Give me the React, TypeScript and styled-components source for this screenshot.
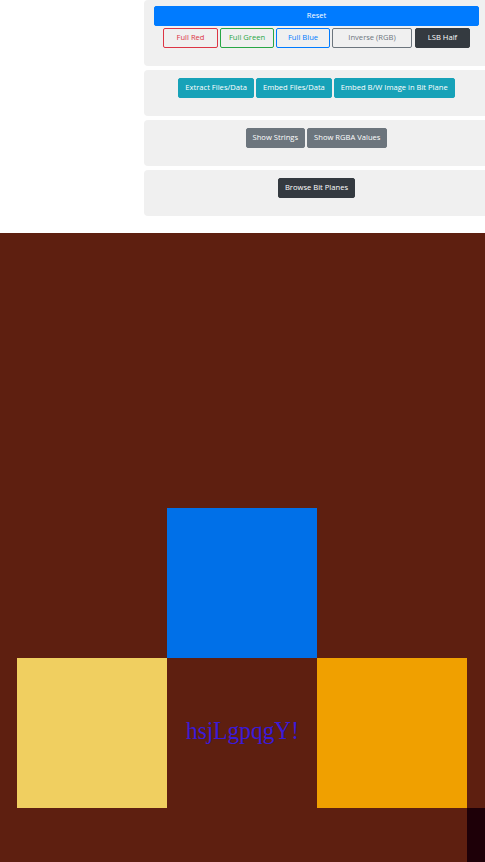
import { createGlobalStyle, styled } from 'styled-components';

const GlobalStyle = createGlobalStyle`
  html, body {
    margin: 0;
    padding: 0;
    overflow: hidden;
    background: #fff;
  }
  body {
    font-family: 'Open Sans', 'Liberation Sans', sans-serif;
  }
`;

type Variant = 'primary' | 'danger' | 'success' | 'info-outline' | 'secondary-outline' | 'dark' | 'teal' | 'gray';

const palette: Record<Variant, { bg: string; border: string; color: string }> = {
  primary: { bg: '#007bff', border: '#007bff', color: '#fff' },
  danger: { bg: 'transparent', border: '#dc3545', color: '#dc3545' },
  success: { bg: 'transparent', border: '#28a745', color: '#28a745' },
  'info-outline': { bg: 'transparent', border: '#007bff', color: '#007bff' },
  'secondary-outline': { bg: 'transparent', border: '#6c757d', color: '#6c757d' },
  dark: { bg: '#343a40', border: '#343a40', color: '#fff' },
  teal: { bg: '#17a2b8', border: '#17a2b8', color: '#fff' },
  gray: { bg: '#6c757d', border: '#6c757d', color: '#fff' },
};

const Top = styled.div`
  padding: 0 0 17px 144px;
  display: flex;
  flex-direction: column;
  gap: 4px;
  width: 345px;
`;

const Panel = styled.div<{ $first?: boolean }>`
  background: #f0f0f0;
  border-radius: 4px;
  padding: ${(p) => (p.$first ? '6px' : '8px')} 10px 18px;
  text-align: center;
`;

const Row = styled.div`
  display: flex;
  justify-content: center;
  gap: 2px;
`;

const Btn = styled.button<{ $v: Variant; $w?: number; $block?: boolean }>`
  box-sizing: border-box;
  height: 20px;
  padding: 0 6px;
  ${(p) => (p.$w ? `width: ${p.$w}px;` : '')}
  ${(p) => (p.$block ? 'width: 100%; display: block; margin-bottom: 2px;' : '')}
  background: ${(p) => palette[p.$v].bg};
  border: 1px solid ${(p) => palette[p.$v].border};
  color: ${(p) => palette[p.$v].color};
  border-radius: 2px;
  font-family: 'Open Sans', 'Liberation Sans', sans-serif;
  font-size: 7.6px;
  line-height: 1;
  white-space: nowrap;
`;

const Canvas = styled.svg`
  display: block;
`;

export default function App() {
  return (
    <>
      <GlobalStyle />
      <Top>
        <Panel $first>
          <Btn $v="primary" $block>Reset</Btn>
          <Row>
            <Btn $v="danger" $w={55}>Full Red</Btn>
            <Btn $v="success" $w={54}>Full Green</Btn>
            <Btn $v="info-outline" $w={54}>Full Blue</Btn>
            <Btn $v="secondary-outline" $w={80}>Inverse (RGB)</Btn>
            <Btn $v="dark" $w={55} style={{ marginLeft: 1 }}>LSB Half</Btn>
          </Row>
        </Panel>
        <Panel>
          <Row>
            <Btn $v="teal">Extract Files/Data</Btn>
            <Btn $v="teal">Embed Files/Data</Btn>
            <Btn $v="teal">Embed B/W Image in Bit Plane</Btn>
          </Row>
        </Panel>
        <Panel>
          <Row>
            <Btn $v="gray">Show Strings</Btn>
            <Btn $v="gray">Show RGBA Values</Btn>
          </Row>
        </Panel>
        <Panel>
          <Row>
            <Btn $v="dark">Browse Bit Planes</Btn>
          </Row>
        </Panel>
      </Top>
      <Canvas width={485} height={640} viewBox="0 0 485 640">
        <rect x={0} y={0} width={485} height={640} fill="#5e1f10" />
        <rect x={167} y={275} width={150} height={150} fill="#0070e8" />
        <rect x={17} y={425} width={150} height={150} fill="#f0cf60" />
        <rect x={317} y={425} width={150} height={150} fill="#f0a000" />
        <rect x={467} y={575} width={18} height={65} fill="#1e0008" />
        <text
          x={186}
          y={506}
          textLength={113}
          lengthAdjust="spacingAndGlyphs"
          fontFamily="'Liberation Serif', serif"
          fontSize={26}
          fill="#3a1ad8"
        >
          hsjLgpqgY!
        </text>
      </Canvas>
    </>
  );
}
